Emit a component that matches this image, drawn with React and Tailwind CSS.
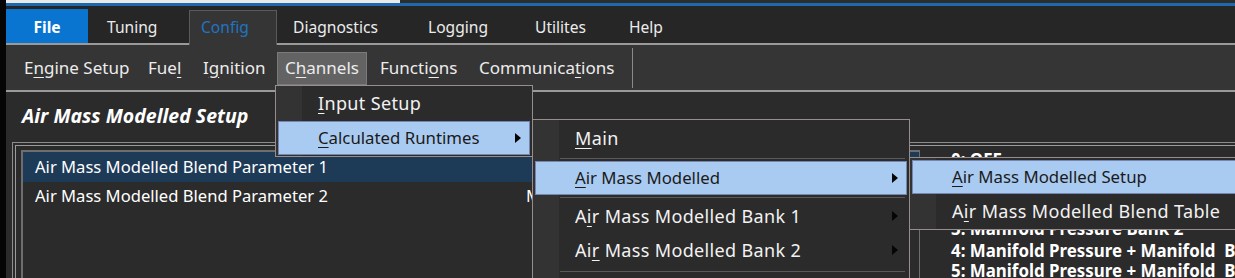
import React from "react";

function Mn({ text, at }) {
  return (
    <>
      {text.slice(0, at)}
      <span className="underline decoration-1 underline-offset-[3px]">{text[at]}</span>
      {text.slice(at + 1)}
    </>
  );
}

function Arrow() {
  return (
    <svg width="6" height="10" viewBox="0 0 6 10" className="shrink-0">
      <path d="M0 0L6 5L0 10Z" fill="#050505" />
    </svg>
  );
}

function MenuItem({ text, at, active, arrow, h = "h-[34px]" }) {
  return (
    <div
      className={`${h} mx-[2px] flex items-center justify-between pl-[39px] pr-[8px] whitespace-nowrap ${
        active
          ? "bg-[#aacbf1] border border-[#7486b0] text-[#1a1a1a] text-[16.8px]"
          : "border border-transparent text-[#f2f2f2] text-[18px] tracking-[0.35px]"
      }`}
    >
      <span>
        <Mn text={text} at={at} />
      </span>
      {arrow && <Arrow />}
    </div>
  );
}

function Sep({ h }) {
  return (
    <div className={`${h} flex items-center`}>
      <div className="h-px w-full ml-[27px] mr-[4px] bg-[#5a5a5a]" />
    </div>
  );
}

const menuBox =
  "absolute border border-[#978d8d] bg-[linear-gradient(to_right,#333333_26px,#2b2b2b_26px)]";

export default function App() {
  const tabs = [
    { label: "Diagnostics", w: "w-[135px]" },
    { label: "Logging", w: "w-[107px]" },
    { label: "Utilites", w: "w-[94px]" },
    { label: "Help", w: "w-[70px]" },
  ];
  const enums = [
    { t: "0: OFF", h: "h-[20px]" },
    { t: "1: Manifold Pressure", h: "h-[24px]" },
    { t: "2: Manifold Pressure Bank 1", h: "h-[24px]" },
    { t: "3: Manifold Pressure Bank 2", h: "h-[22px]" },
    { t: "4: Manifold Pressure + Manifold  Bank 1", h: "h-[21px]" },
    { t: "5: Manifold Pressure + Manifold  Bank 2", h: "h-[20px]" },
  ];

  return (
    <div className="relative w-[1235px] h-[278px] overflow-hidden flex bg-[#2b2b2b] font-['Noto_Sans',sans-serif] text-[#ececec]">
      <div className="w-[6px] shrink-0 bg-[#050505]" />
      <div className="flex-1 flex flex-col min-w-0">
        {/* window top */}
        <div className="h-[3px] shrink-0 bg-[#2d2d2d]">
          <div className="h-full w-[394px] bg-[#e9e9e9]" />
        </div>
        <div className="h-[3px] shrink-0 bg-[#1d69ad]" />

        {/* ribbon tabs */}
        <div className="h-[39px] shrink-0 flex items-end bg-[#262626] text-[15.6px]">
          <div className="w-[82px] h-[36px] bg-[#0a74d1] border-b-2 border-[#9a9a9a] flex items-center justify-center pt-[3px] font-bold text-white">
            File
          </div>
          <div className="w-[101px] h-[36px] border-b-2 border-[#9a9a9a] flex items-center pl-[19px] pt-[3px]">
            Tuning
          </div>
          <div className="w-[88px] h-[35px] bg-[#353535] border-t border-x border-[#5a5a5a] flex items-center pl-[11px] pb-[1px] text-[#1f74c4]">
            Config
          </div>
          {tabs.map((t) => (
            <div
              key={t.label}
              className={`${t.w} h-[36px] border-b-2 border-[#9a9a9a] flex items-center pl-[16px] pt-[3px]`}
            >
              {t.label}
            </div>
          ))}
          <div className="flex-1 h-[36px] border-b-2 border-[#9a9a9a]" />
        </div>

        {/* config sub menu */}
        <div className="h-[45px] shrink-0 flex items-center bg-[#353535] text-[17px] whitespace-nowrap">
          <div className="w-[124px] ml-[18px]">
            <Mn text="Engine Setup" at={1} />
          </div>
          <div className="w-[55px]">
            <Mn text="Fuel" at={3} />
          </div>
          <div className="w-[74px]">
            <Mn text="Ignition" at={1} />
          </div>
          <div className="w-[90px] h-[33px] mt-[1px] flex items-center pl-[7px] bg-[#636363] border border-[#7a7a7a]">
            <Mn text="Channels" at={1} />
          </div>
          <div className="w-[99px] ml-[13px]">
            <Mn text="Functions" at={6} />
          </div>
          <div className="w-[153px]">
            <Mn text="Communications" at={9} />
          </div>
          <div className="w-px h-[40px] bg-[#8a8a8a]" />
        </div>
        <div className="h-[2px] shrink-0 bg-[#9a9a9a]" />

        {/* page */}
        <div className="flex-1 flex flex-col min-h-0">
          <div className="h-[50px] shrink-0 flex items-center pl-[16px] pb-[2px] text-[19.5px] font-bold italic text-white">
            Air Mass Modelled Setup
          </div>
          <div className="flex-1 min-h-0 overflow-hidden ml-[6px] border-t border-l border-[#8c8c8c] pt-[2px] pl-[2px]">
            <div className="h-full border-t border-l border-[#9a9a9a] pt-[4px] pl-[5px] flex">
              <div className="w-[899px] shrink-0 border-t-2 border-l-2 border-r border-[#6e6e6e] text-[16.6px] text-white whitespace-nowrap">
                <div className="h-[30px] flex items-center bg-[#1d3a57]">
                  <div className="w-[503px] pl-[12px]">Air Mass Modelled Blend Parameter 1</div>
                </div>
                <div className="h-[29px] flex items-center">
                  <div className="w-[503px] pl-[12px]">Air Mass Modelled Blend Parameter 2</div>
                  <div>Manifold Pressure Bank 1</div>
                </div>
              </div>
              <div className="flex-1 pl-[31px] text-[16.9px] font-bold text-white whitespace-nowrap">
                {enums.map((e) => (
                  <div key={e.t} className={`${e.h} flex items-center whitespace-pre`}>
                    {e.t}
                  </div>
                ))}
              </div>
            </div>
          </div>
        </div>
      </div>

      {/* Channels dropdown */}
      <div className={`${menuBox} left-[275px] top-[85px] w-[258px] h-[72px] pt-[1px] flex flex-col gap-[1px]`}>
        <MenuItem text="Input Setup" at={0} h="h-[33px]" />
        <MenuItem text="Calculated Runtimes" at={0} active arrow />
      </div>

      {/* Calculated Runtimes submenu */}
      <div className={`${menuBox} left-[532px] top-[119px] w-[378px] h-[180px] pt-[1px]`}>
        <MenuItem text="Main" at={0} />
        <Sep h="h-[6px]" />
        <MenuItem text="Air Mass Modelled" at={0} active arrow />
        <Sep h="h-[4px]" />
        <MenuItem text="Air Mass Modelled Bank 1" at={1} arrow />
        <MenuItem text="Air Mass Modelled Bank 2" at={2} arrow />
        <Sep h="h-[8px]" />
      </div>

      {/* Air Mass Modelled submenu */}
      <div className={`${menuBox} left-[909px] top-[157px] w-[340px] h-[73px] pt-[2px]`}>
        <MenuItem text="Air Mass Modelled Setup" at={0} active />
        <MenuItem text="Air Mass Modelled Blend Table" at={1} />
      </div>
    </div>
  );
}
